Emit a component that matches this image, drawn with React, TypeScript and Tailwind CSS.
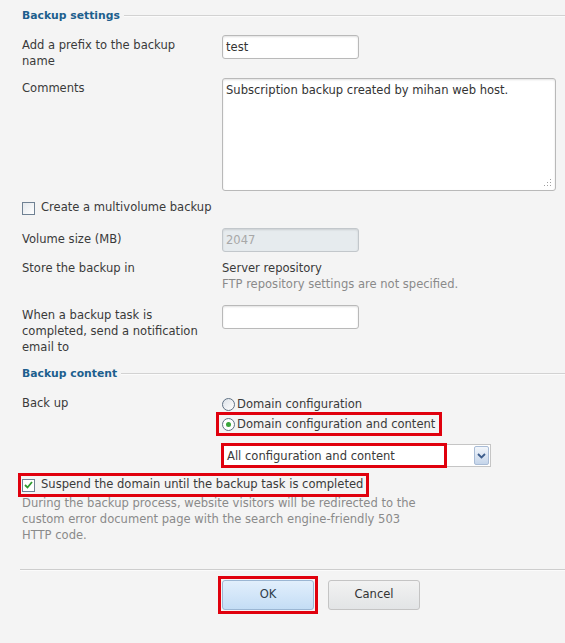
import React from "react";

const font = { fontFamily: "'DejaVu Sans', sans-serif" };

function Header({ title }: { title: string }) {
  return (
    <div className="flex items-center h-[20px] pl-[22px]">
      <span className="font-bold text-[#1d5f8e] text-[10.8px] pr-[4px]">{title}</span>
      <div className="flex-1 flex flex-col">
        <div className="h-[1px] bg-[#d2d2d2]"></div>
        <div className="h-[1px] bg-[#fbfbfb]"></div>
      </div>
    </div>
  );
}

function Row({
  label,
  children,
  className = "",
}: {
  label: React.ReactNode;
  children?: React.ReactNode;
  className?: string;
}) {
  return (
    <div className={"flex " + className}>
      <div className="w-[222px] shrink-0 pl-[22px] pr-[16px] leading-[16px]">{label}</div>
      <div className="flex-1 leading-[16px]">{children}</div>
    </div>
  );
}

const inputCls =
  "w-[137px] h-[24px] border border-[#b9b9b9] rounded-[3px] px-[3px] text-[#333] shadow-[inset_0_1px_2px_rgba(0,0,0,0.12)] flex items-center";

export default function App() {
  return (
    <div
      className="w-[565px] h-[643px] bg-[#f4f4f4] text-[11.55px] text-[#3a3a3a] overflow-hidden"
      style={font}
    >
      <div className="pt-[6px]">
        <Header title="Backup settings" />

        <Row label="Add a prefix to the backup name" className="mt-[11px] h-[32px]">
          <div className={inputCls + " bg-white -mt-[2px]"}>test</div>
        </Row>

        <Row label="Comments" className="mt-[11px] h-[111px]">
          <div className="-mt-[2px] w-[334px] h-[113px] border border-[#b9b9b9] rounded-[3px] bg-white px-[3px] pt-[3px] shadow-[inset_0_1px_2px_rgba(0,0,0,0.12)] relative text-[#333]">
            Subscription backup created by mihan web host.
            <svg className="absolute right-[3px] bottom-[3px]" width="8" height="8" viewBox="0 0 8 8">
              <rect x="6" y="0" width="1" height="1" fill="#a0a0a0" />
              <rect x="3" y="3" width="1" height="1" fill="#a0a0a0" />
              <rect x="6" y="3" width="1" height="1" fill="#a0a0a0" />
              <rect x="0" y="6" width="1" height="1" fill="#a0a0a0" />
              <rect x="3" y="6" width="1" height="1" fill="#a0a0a0" />
              <rect x="6" y="6" width="1" height="1" fill="#a0a0a0" />
            </svg>
          </div>
        </Row>

        <div className="flex items-center pl-[22px] mt-[9px] h-[16px]">
          <div className="w-[13px] h-[13px] border border-[#6f8193] bg-gradient-to-br from-[#e4e8ec] to-white"></div>
          <span className="ml-[6px]">Create a multivolume backup</span>
        </div>

        <Row label="Volume size (MB)" className="mt-[15px] h-[16px]">
          <div className={inputCls + " bg-[#e6ebee] -mt-[3px] text-[#a8a8a8] border-[#c2c7cb]"}>2047</div>
        </Row>

        <Row label="Store the backup in" className="mt-[13px] h-[32px]">
          <div>Server repository</div>
          <div className="text-[#8a8a8a]">FTP repository settings are not specified.</div>
        </Row>

        <Row
          label="When a backup task is completed, send a notification email to"
          className="mt-[15px] h-[48px]"
        >
          <div className={inputCls + " bg-white -mt-[2px]"}></div>
        </Row>

        <div className="mt-[9px]">
          <Header title="Backup content" />
        </div>

        <Row label="Back up" className="mt-[11px]">
          <div className="flex items-center h-[18px]">
            <span className="w-[13px] h-[13px] rounded-full border border-[#5f7184] bg-gradient-to-br from-[#dde2e8] to-white"></span>
            <span className="ml-[2px]">Domain configuration</span>
          </div>
          <div className="-ml-[6px] -mt-[1px] inline-flex items-center h-[24px] border-[3px] border-[#e0000d] pl-[3px] pr-[4px]">
            <span className="w-[13px] h-[13px] rounded-full border border-[#5f7184] bg-white flex items-center justify-center">
              <span className="w-[5px] h-[5px] rounded-full bg-[#3aa53a]"></span>
            </span>
            <span className="ml-[2px]">Domain configuration and content</span>
          </div>
          <div className="mt-[7px] -ml-[1px] relative w-[270px] h-[25px] flex items-center">
            <div className="absolute left-0 right-0 top-[1px] bottom-[1px] border border-[#c5c5c5] bg-white"></div>
            <div className="absolute left-0 top-0 w-[226px] h-[25px] border-[3px] border-[#e0000d]"></div>
            <span className="relative pl-[6px]">All configuration and content</span>
            <div className="absolute right-[2px] top-[3px] w-[15px] h-[19px] rounded-[2px] border border-[#a9bcd6] bg-gradient-to-b from-[#f2f6fb] to-[#c5d5ea] flex items-center justify-center">
              <svg width="9" height="6" viewBox="0 0 9 6">
                <path d="M1 1l3.5 3.5L8 1" stroke="#3d5d8c" strokeWidth="1.8" fill="none" />
              </svg>
            </div>
          </div>
        </Row>

        <div className="ml-[18px] mt-[5px] inline-flex items-center h-[24px] border-[3px] border-[#e0000d] pl-[1px] pr-[3px]">
          <div className="w-[13px] h-[13px] border border-[#6f8193] bg-white flex items-center justify-center">
            <svg width="9" height="8" viewBox="0 0 9 8">
              <path d="M1 4l2.5 2.5L8 1" stroke="#2f9a2f" strokeWidth="1.8" fill="none" />
            </svg>
          </div>
          <span className="ml-[6px]">Suspend the domain until the backup task is completed</span>
        </div>

        <div className="pl-[22px] w-[428px] -mt-[2px] leading-[16px] text-[#8a8a8a]">
          During the backup process, website visitors will be redirected to the custom error document
          page with the search engine-friendly 503 HTTP code.
        </div>

        <div className="ml-[20px] mt-[26px]">
          <div className="h-[1px] bg-[#cdcdcd]"></div>
          <div className="h-[1px] bg-[#fbfbfb]"></div>
        </div>

        <div className="flex items-start pl-[218px] mt-[5px]">
          <div className="border-[3px] border-[#e0000d] p-[1px]">
            <button className="w-[92px] h-[30px] border border-[#9bb6d3] rounded-[3px] bg-gradient-to-b from-[#e2effc] to-[#c4ddf5] text-[#2f3d4c]">
              OK
            </button>
          </div>
          <div className="pt-[4px] ml-[10px]">
            <button className="w-[92px] h-[30px] border border-[#c4c4c4] rounded-[3px] bg-gradient-to-b from-[#f2f2f2] to-[#e2e4e6] text-[#333]">
              Cancel
            </button>
          </div>
        </div>
      </div>
    </div>
  );
}
